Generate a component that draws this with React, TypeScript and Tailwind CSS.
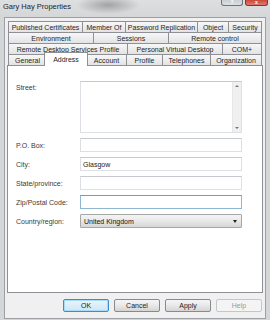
import React from "react";
import clsx from "clsx";

type T = [string, string];

const row1: T[] = [
  ["Published Certificates", "w-[74px]"],
  ["Member Of", "w-[43px]"],
  ["Password Replication", "w-[72px]"],
  ["Object", "w-[31px]"],
  ["Security", "w-[34px]"],
];
const row2: T[] = [
  ["Environment", "w-[85px]"],
  ["Sessions", "w-[75px]"],
  ["Remote control", "w-[94px]"],
];
const row3: T[] = [
  ["Remote Desktop Services Profile", "w-[119px]"],
  ["Personal Virtual Desktop", "w-[95px]"],
  ["COM+", "w-[40px]"],
];

function Tab({ label, w, last }: { label: string; w: string; last?: boolean }) {
  return (
    <div
      className={clsx(
        "h-full flex items-center justify-center border-t border-l border-[#8e9096] bg-gradient-to-b from-[#f7f7f7] to-[#e3e3e3] whitespace-nowrap text-[#262626]",
        w,
        last && "border-r"
      )}
    >
      {label}
    </div>
  );
}

function Row({ tabs }: { tabs: T[] }) {
  return (
    <div className="flex h-[11px] mx-[1px]">
      {tabs.map((t, i) => (
        <Tab key={t[0]} label={t[0]} w={t[1]} last={i === tabs.length - 1} />
      ))}
    </div>
  );
}

function Field({ label, value, focus }: { label: string; value?: string; focus?: boolean }) {
  return (
    <div className="flex items-center h-[14px]">
      <div className="w-[64px] text-[#3a3a3a]">{label}</div>
      <div
        className={clsx(
          "w-[162px] h-[14px] border bg-white flex items-center pl-[2px] text-[#222]",
          focus ? "border-[#8fb6d3] border-t-[#6f9cbf]" : "border-[#dcdfe3] border-t-[#c5c8cc]"
        )}
      >
        {value}
      </div>
    </div>
  );
}

function Btn({ label, def, disabled }: { label: string; def?: boolean; disabled?: boolean }) {
  return (
    <div
      className={clsx(
        "w-[46px] h-[13px] rounded-[2px] border flex items-center justify-center",
        disabled
          ? "border-[#c4c7c9] bg-[#f4f4f4] text-[#9a9a9a]"
          : def
          ? "border-[#3d8ed0] bg-gradient-to-b from-[#eaf6fd] to-[#cfe5f3] text-[#1c1c1c] shadow-[inset_0_0_0_1px_#a8dbf5]"
          : "border-[#8a8a8a] bg-gradient-to-b from-[#f5f5f5] via-[#e8e8e8] to-[#d4d4d4] text-[#1c1c1c]"
      )}
    >
      {label}
    </div>
  );
}

export default function App() {
  return (
    <div
      className="w-[270px] h-[320px] overflow-hidden bg-[#d4d6d8] text-[7px] leading-none"
      style={{ fontFamily: '"Liberation Sans", Arial, sans-serif' }}
    >
      {/* title bar */}
      <div className="h-[17px] flex items-start bg-[radial-gradient(ellipse_32px_9px_at_108px_5px,#a3a3a3,transparent),linear-gradient(#dedfe0,#d4d6d8)]">
        <div className="pl-[3px] pt-[3px] text-[7.5px] text-[#1e1e1e]">Gary Hay Properties</div>
        <div className="ml-auto mr-[2px] flex gap-[2px]">
          <div className="w-[22px] h-[6px] rounded-b-[3px] border border-t-0 border-[#6f747a] bg-gradient-to-b from-[#c9ced4] to-[#dde1e5] flex items-center justify-center overflow-hidden">
            <span className="text-[5px] font-bold text-white leading-none">?</span>
          </div>
          <div className="w-[23px] h-[6px] rounded-b-[3px] border border-t-0 border-[#7a3a33] bg-gradient-to-b from-[#c8483c] to-[#e07a6d] flex items-center justify-center overflow-hidden">
            <span className="text-[5px] font-bold text-white leading-none">x</span>
          </div>
        </div>
      </div>

      {/* client area */}
      <div className="mx-[4px] h-[302px] border border-[#9c9fa3] bg-[#f0f0f0] px-[2px] pt-[3px]">
        <Row tabs={row1} />
        <Row tabs={row2} />
        <Row tabs={row3} />
        <div className="flex h-[11px] mx-[1px] items-start">
          <Tab label="General" w="w-[38px]" />
          <div className="relative z-10 -mx-[2px] -mt-[2px] h-[14px] w-[44px] bg-white border-t border-l border-r border-[#8e9096] flex items-center justify-center text-[#262626]">
            Address
          </div>
          <Tab label="Account" w="w-[40px]" />
          <Tab label="Profile" w="w-[36px]" />
          <Tab label="Telephones" w="w-[48px]" />
          <Tab label="Organization" w="w-[52px]" last />
        </div>

        {/* panel */}
        <div className="h-[228px] border border-[#8e9096] bg-white pl-[8px] pt-[15px] flex flex-col gap-[5px]">
          <div className="flex items-start">
            <div className="w-[64px] pt-[3px] text-[#3a3a3a]">Street:</div>
            <div className="w-[162px] h-[52px] border border-[#dcdfe3] border-t-[#c5c8cc] bg-white flex justify-end">
              <div className="w-[9px] h-full bg-[#f0f0f0] border-l border-[#e6e6e6] flex flex-col items-center justify-between py-[3px]">
                <div className="w-0 h-0 border-l-[2px] border-r-[2px] border-b-[2px] border-l-transparent border-r-transparent border-b-[#777]" />
                <div className="w-0 h-0 border-l-[2px] border-r-[2px] border-t-[2px] border-l-transparent border-r-transparent border-t-[#777]" />
              </div>
            </div>
          </div>
          <Field label="P.O. Box:" />
          <Field label="City:" value="Glasgow" />
          <Field label="State/province:" />
          <Field label="Zip/Postal Code:" focus />
          <div className="flex items-center h-[14px]">
            <div className="w-[64px] text-[#3a3a3a]">Country/region:</div>
            <div className="w-[162px] h-[14px] border border-[#a7a7a7] rounded-[1px] bg-gradient-to-b from-[#f4f4f4] via-[#e8e8e8] to-[#d6d6d6] flex items-center pl-[3px] pr-[4px] text-[#111]">
              <span>United Kingdom</span>
              <div className="ml-auto w-0 h-0 border-l-[2.5px] border-r-[2.5px] border-t-[3px] border-l-transparent border-r-transparent border-t-[#222]" />
            </div>
          </div>
        </div>

        {/* buttons */}
        <div className="mt-[6px] flex justify-end gap-[5px] pr-[1px]">
          <Btn label="OK" def />
          <Btn label="Cancel" />
          <Btn label="Apply" />
          <Btn label="Help" disabled />
        </div>
      </div>
    </div>
  );
}
